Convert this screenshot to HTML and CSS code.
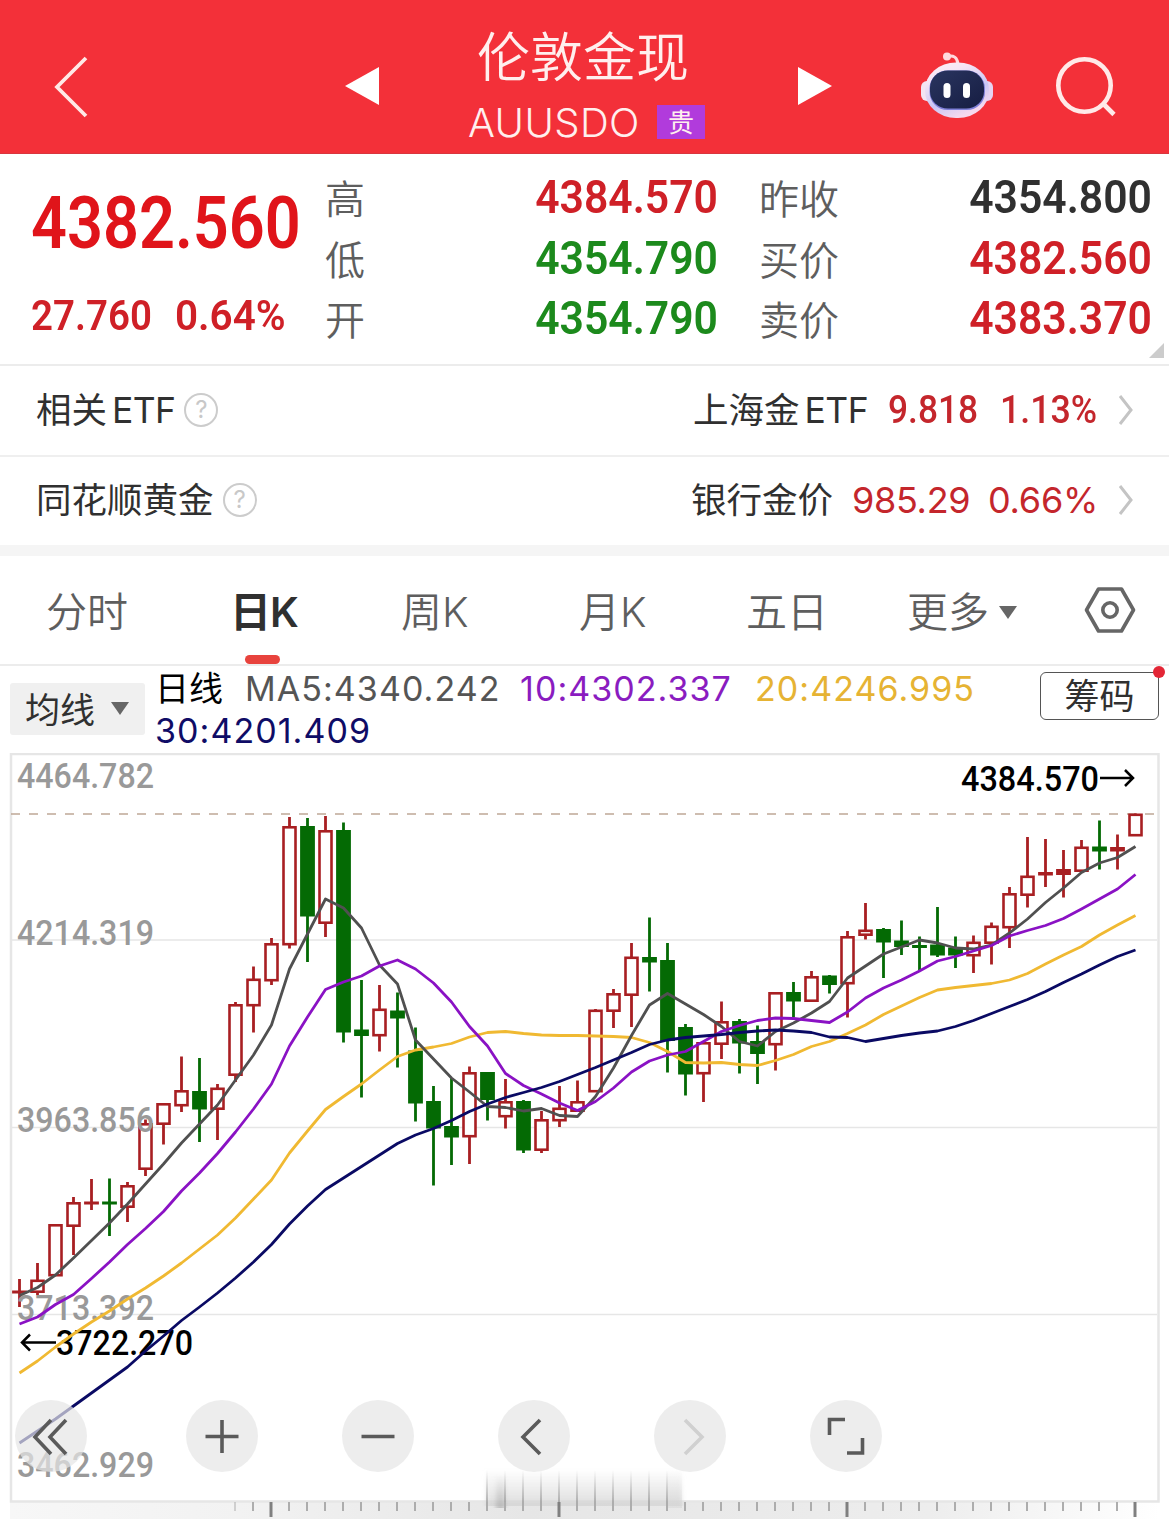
FILE: index.html
```html
<!DOCTYPE html>
<html lang="zh-CN">

<head>
    <meta charset="UTF-8">
    <title>伦敦金现 AUUSDO</title>
    <link rel="stylesheet" href="styles.css">
</head>

<body>
    <header class="header">
        <svg class="back" width="40" height="68" viewBox="0 0 40 68">
            <path d="M35 5 L6 34 L35 63" fill="none" stroke="#ffe9e6" stroke-width="3.8" />
        </svg>
        <svg class="prev" width="34" height="38" viewBox="0 0 34 38">
            <path d="M0 19 L34 0 V38 Z" fill="#fff" />
        </svg>
        <div class="title">
            <div class="title-name">伦敦金现</div>
            <div class="title-code">
                <span class="code">AUUSDO</span>
                <span class="badge">贵</span>
            </div>
        </div>
        <svg class="next" width="34" height="38" viewBox="0 0 34 38">
            <path d="M34 19 L0 0 V38 Z" fill="#fff" />
        </svg>
        <svg class="robot" width="74" height="70" viewBox="0 0 74 70">
            <defs>
                <linearGradient id="head" x1="0" y1="0" x2="0.5" y2="1">
                    <stop offset="0" stop-color="#fff0f4" />
                    <stop offset="0.3" stop-color="#f6e4f4" />
                    <stop offset="0.7" stop-color="#c9c6f5" />
                    <stop offset="1" stop-color="#f6d9ee" />
                </linearGradient>
                <linearGradient id="face" x1="0" y1="0" x2="1" y2="1">
                    <stop offset="0" stop-color="#2a3560" />
                    <stop offset="1" stop-color="#161d42" />
                </linearGradient>
            </defs>
            <path d="M27 7.500 Q37 5 38 15" fill="none" stroke="#ffd9de" stroke-width="3" />
            <circle cx="27" cy="7.500" r="4" fill="#ffd9de" />
            <rect x="1" y="32" width="12" height="20" rx="6" fill="#f3e4f2" />
            <rect x="61" y="32" width="12" height="20" rx="6" fill="#e6d3f2" />
            <rect x="5" y="13.500" width="64" height="55.500" rx="31" ry="27" fill="url(#head)" />
            <rect x="9.500" y="21.500" width="55.500" height="39.500" rx="18" fill="#7f80d8" />
            <rect x="10" y="21.500" width="54" height="38" rx="18" ry="17" fill="url(#face)" />
            <rect x="23.500" y="34" width="7" height="15" rx="3.500" fill="#fff" />
            <rect x="43" y="34" width="7" height="15" rx="3.500" fill="#fff" />
        </svg>
        <svg class="search" width="62" height="62" viewBox="0 0 62 62">
            <circle cx="28.500" cy="30.500" r="26.200" fill="none" stroke="#ffe9e8" stroke-width="4.600" />
            <path d="M47.500 49 L58 59.500" stroke="#ffe9e8" stroke-width="4.600" />
        </svg>
    </header>

    <section class="quote">
        <div class="quote-main">
            <div class="price din">4382.560</div>
            <div class="change">
                <span class="change-value din">27.760</span>
                <span class="change-rate din">0.64%</span>
            </div>
        </div>
        <div class="quote-grid">
            <span class="label">高</span><span class="value din up">4384.570</span>
            <span class="label">昨收</span><span class="value din">4354.800</span>
            <span class="label">低</span><span class="value din down">4354.790</span>
            <span class="label">买价</span><span class="value din up">4382.560</span>
            <span class="label">开</span><span class="value din down">4354.790</span>
            <span class="label">卖价</span><span class="value din up">4383.370</span>
        </div>
        <i class="corner"></i>
    </section>

    <section class="related">
        <div class="row">
            <span class="row-name">相关<span class="latin">ETF</span></span>
            <span class="help">?</span>
            <span class="row-target">上海金<span class="latin">ETF</span></span>
            <span class="etf-price din">9.818</span>
            <span class="etf-rate din">1.13%</span>
            <svg class="chevron" width="18" height="32" viewBox="0 0 18 32">
                <path d="M3 2 L14 16 L3 30" fill="none" stroke="#c4c4c4" stroke-width="3" />
            </svg>
        </div>
        <div class="row">
            <span class="row-name">同花顺黄金</span>
            <span class="help">?</span>
            <span class="row-target">银行金价</span>
            <span class="bank-price">985.29</span>
            <span class="bank-rate">0.66%</span>
            <svg class="chevron" width="18" height="32" viewBox="0 0 18 32">
                <path d="M3 2 L14 16 L3 30" fill="none" stroke="#c4c4c4" stroke-width="3" />
            </svg>
        </div>
    </section>

    <nav class="tabs">
        <span class="tab">分时</span>
        <span class="tab active">日K</span>
        <span class="tab">周K</span>
        <span class="tab">月K</span>
        <span class="tab">五日</span>
        <span class="tab">更多<i class="arrow-down"></i></span>
        <svg class="setting" width="52" height="48" viewBox="0 0 52 48">
            <path d="M14.500 3 H37.500 L49.500 24 L37.500 45 H14.500 L2.500 24 Z" fill="none" stroke="#666" stroke-width="3.600" stroke-linejoin="round" />
            <circle cx="26" cy="24" r="7.200" fill="none" stroke="#666" stroke-width="3.600" />
        </svg>
    </nav>

    <section class="ma-bar">
        <div class="ma-select">均线<i class="arrow-down"></i></div>
        <div class="ma-list">
            <span class="ma-title">日线</span>
            <span class="ma ma5">MA5:4340.242</span>
            <span class="ma ma10">10:4302.337</span>
            <span class="ma ma20">20:4246.995</span>
            <span class="ma ma30">30:4201.409</span>
        </div>
        <div class="chips">筹码<i class="dot"></i></div>
    </section>

    <section class="chart">
        <svg id="kline" width="1169" height="766" viewBox="0 753 1169 766">
            <defs>
                <linearGradient id="strip">
                    <stop offset="0" stop-color="#f7f7f7" />
                    <stop offset="0.2" stop-color="#f2f2f2" />
                    <stop offset="0.45" stop-color="#e6e6e6" />
                    <stop offset="0.8" stop-color="#ededed" />
                    <stop offset="1" stop-color="#fff" />
                </linearGradient>
                <linearGradient id="smear" x1="0" y1="0" x2="0" y2="1">
                    <stop offset="0" stop-color="#ddd" stop-opacity="0" />
                    <stop offset="1" stop-color="#d4d4d4" stop-opacity="0.8" />
                </linearGradient>
                <linearGradient id="streak" x1="0" y1="0" x2="0" y2="1">
                    <stop offset="0" stop-color="#aaa" stop-opacity="0" />
                    <stop offset="1" stop-color="#999" stop-opacity="0.8" />
                </linearGradient>
                <filter id="soft" x="-0.5" y="0" width="2" height="1">
                    <feGaussianBlur stdDeviation="2 0" />
                </filter>
            </defs>
            <rect x="10" y="1502" width="1149" height="17" fill="url(#strip)" />
            <g id="grid"></g>
            <g id="candles"></g>
            <g class="axis">
                <text x="17" y="788" textLength="137" lengthAdjust="spacingAndGlyphs">4464.782</text>
                <text x="17" y="945" textLength="137" lengthAdjust="spacingAndGlyphs">4214.319</text>
                <text x="17" y="1132" textLength="137" lengthAdjust="spacingAndGlyphs">3963.856</text>
                <text x="17" y="1320" textLength="137" lengthAdjust="spacingAndGlyphs">3713.392</text>
                <text x="17" y="1477" textLength="137" lengthAdjust="spacingAndGlyphs">3462.929</text>
            </g>
            <g class="mark">
                <text x="961" y="791" textLength="138" lengthAdjust="spacingAndGlyphs">4384.570</text>
                <path d="M1100 778 H1133 M1125 770 L1133 778 L1125 786" />
                <text x="56" y="1355" textLength="137" lengthAdjust="spacingAndGlyphs">3722.270</text>
                <path d="M56 1342.500 H22 M30 1334.500 L22 1342.500 L30 1350.500" />
            </g>
            <g id="lines"></g>
            <g id="ticks"></g>
        </svg>

        <div class="controls">
            <div class="control first">
                <svg width="72" height="72" viewBox="0 0 72 72"><path d="M36 20 L20 37 L36 54 M51 20 L35 37 L51 54" /></svg>
            </div>
            <div class="control">
                <svg width="72" height="72" viewBox="0 0 72 72"><path d="M36 20 V53 M19.500 36.500 H52.500" /></svg>
            </div>
            <div class="control">
                <svg width="72" height="72" viewBox="0 0 72 72"><path d="M19.500 36.500 H52.500" /></svg>
            </div>
            <div class="control">
                <svg width="72" height="72" viewBox="0 0 72 72"><path d="M42 20 L25 37 L42 54" /></svg>
            </div>
            <div class="control disabled">
                <svg width="72" height="72" viewBox="0 0 72 72"><path d="M31 20 L48 37 L31 54" /></svg>
            </div>
            <div class="control">
                <svg width="72" height="72" viewBox="0 0 72 72"><path d="M19.500 35 V19.500 H35 M37 53 H52.500 V38" /></svg>
            </div>
        </div>
    </section>

    <script src="script.js"></script>
</body>

</html>
```

FILE: styles.css
```css
* {
    box-sizing: border-box;
}

body {
    margin: 0;
    width: 1169px;
    height: 1519px;
    overflow: hidden;
    background-color: #fff;
    color: #303030;
    font-family: Inter, "Noto Sans CJK SC", sans-serif;
}

svg {
    display: block;
    flex: none;
}

/* condensed number face */
.din {
    display: inline-block;
    font-family: Roboto, sans-serif;
    font-weight: 600;
    white-space: nowrap;
    transform-origin: left center;
}

/* header */
.header {
    display: flex;
    height: 154px;
    background-color: #f33039;
    border-bottom: 1px solid #d9363e;
    color: #ffefee;
}

.back {
    margin: 53px 0 0 51px;
}

.prev {
    margin: 67px 0 0 254px;
}

.title {
    width: 288px;
    margin-left: 60px;
    padding-top: 26px;
}

.title-name {
    height: 64px;
    line-height: 64px;
    font-size: 53px;
    font-weight: 350;
    text-align: center;
}

.title-code {
    display: flex;
    align-items: center;
    height: 64px;
    padding-left: 29px;
}

.code {
    width: 188px;
    font-size: 40px;
    font-weight: 350;
    letter-spacing: 0.4px;
}

.badge {
    width: 48px;
    height: 34px;
    margin-left: 1px;
    line-height: 36px;
    background-color: #b13bdc;
    font-size: 26px;
    text-align: center;
}

.next {
    margin: 67px 0 0 71px;
}

.robot {
    margin: 49px 0 0 88px;
}

.search {
    margin: 55px 0 0 62px;
}

/* quote */
.quote {
    position: relative;
    display: flex;
    height: 212px;
    padding-left: 31px;
    border-bottom: 2px solid #ececec;
}

.quote-main {
    width: 294px;
    padding-top: 30px;
    color: #e0141a;
}

.price {
    height: 80px;
    line-height: 80px;
    font-size: 72px;
    transform: scaleX(0.875);
}

.change {
    display: flex;
    margin-top: 26px;
    font-size: 43px;
    line-height: 50px;
    color: #cf2027;
}

.change-value {
    width: 144px;
    transform: scaleX(0.895);
}

.change-rate {
    transform: scaleX(0.94);
}

.quote-grid {
    display: grid;
    grid-template-columns: 134px 300px 134px 259px;
    grid-auto-rows: 60.5px;
    line-height: 60px;
    padding-top: 13px;
}

.label {
    padding-top: 3px;
    font-size: 40px;
    font-weight: 350;
    color: #5e5e5e;
}

.value {
    width: 259px;
    font-size: 47px;
    text-align: right;
    transform: scaleX(0.908);
    transform-origin: right center;
}

.up {
    color: #cf2027;
}

.down {
    color: #1c8a1c;
}

.corner {
    position: absolute;
    right: 5px;
    bottom: 6px;
    border-left: 15px solid transparent;
    border-bottom: 15px solid #ccc;
}

/* related rows */
.related {
    border-bottom: 11px solid #f5f5f5;
}

.row {
    display: flex;
    align-items: center;
    height: 89px;
    padding: 0 34px 1px 36px;
    font-size: 35.5px;
}

.row + .row {
    height: 90px;
    border-top: 2px solid #efefef;
    padding-bottom: 2px;
}

.row-name,
.row-target {
    margin-top: -5px;
}

.latin {
    margin-left: 5px;
    font-size: 35.5px;
    letter-spacing: -0.6px;
}

.help {
    width: 34px;
    height: 34px;
    margin-left: 9px;
    border: 2.5px solid #ccc;
    border-radius: 50%;
    line-height: 29px;
    font-size: 24px;
    text-align: center;
    color: #c8c8c8;
}

.row-target {
    margin-left: auto;
}

.etf-price,
.etf-rate,
.bank-price,
.bank-rate {
    color: #c4262c;
}

.etf-price {
    width: 112px;
    margin-left: 20px;
    font-size: 38px;
    font-weight: 500;
    transform: scaleX(0.93);
}

.etf-rate {
    width: 117px;
    font-size: 38px;
    font-weight: 500;
    transform: scaleX(0.94);
}

.bank-price {
    width: 136px;
    margin-left: 19px;
    font-size: 36px;
    letter-spacing: -0.3px;
}

.bank-rate {
    width: 129px;
    font-size: 36px;
    letter-spacing: -0.2px;
}

/* tabs */
.tabs {
    display: grid;
    grid-template-columns: 184px 171px 178px 167px 161px 177px 52px;
    align-items: center;
    height: 110px;
    padding-left: 46px;
    border-bottom: 2px solid #ececec;
}

.tab {
    position: relative;
    height: 108px;
    line-height: 112px;
    font-size: 41px;
    font-weight: 350;
    color: #5e5e5e;
    white-space: nowrap;
}

.tab.active {
    font-weight: 600;
    letter-spacing: -1px;
    color: #303030;
}

.tab.active::after {
    content: "";
    position: absolute;
    left: 15px;
    bottom: 0;
    width: 35px;
    height: 9px;
    border-radius: 5px;
    background-color: #e8433d;
}

.arrow-down {
    display: inline-block;
    margin-left: 10px;
    border: 9px solid transparent;
    border-top: 13px solid #666;
    border-bottom: 0;
    vertical-align: 8px;
}

/* moving averages */
.ma-bar {
    display: flex;
    height: 87px;
    padding-left: 10px;
}

.ma-select {
    width: 135px;
    height: 52px;
    margin-top: 17px;
    padding-left: 15px;
    border-radius: 3px;
    background-color: #f0f0f0;
    line-height: 55px;
    font-size: 35px;
}

.ma-select .arrow-down {
    margin-left: 16px;
}

.ma-list {
    display: flex;
    flex-wrap: wrap;
    align-content: flex-start;
    width: 880px;
    padding: 2px 0 0 10px;
    line-height: 42px;
    font-size: 34px;
}

.ma-title {
    width: 90px;
    color: #000;
}

.ma {
    letter-spacing: 1.05px;
}

.ma5 {
    width: 275px;
    color: #555;
}

.ma10 {
    width: 235px;
    color: #8a1cc0;
}

.ma20 {
    width: 265px;
    color: #e6b333;
}

.ma30 {
    color: #0f0c66;
}

.chips {
    position: relative;
    width: 119px;
    height: 48px;
    margin: 6px 0 0 15px;
    border: 1.5px solid #555;
    border-radius: 6px;
    line-height: 46px;
    font-size: 35px;
    text-align: center;
}

.dot {
    position: absolute;
    top: -7px;
    right: -7px;
    width: 12px;
    height: 12px;
    border-radius: 50%;
    background-color: #e32636;
}

/* chart */
.chart {
    position: relative;
    height: 766px;
}

.axis,
.mark {
    font-family: Roboto, sans-serif;
    font-size: 34.5px;
    font-weight: 500;
}

.axis {
    fill: #999;
}

.mark {
    fill: #000;
}

.mark path {
    fill: none;
    stroke: #000;
    stroke-width: 2.5;
}

.controls {
    position: absolute;
    left: 15px;
    top: 647px;
    display: flex;
    gap: 84px;
}

.control {
    width: 72px;
    height: 72px;
    border-radius: 50%;
    background-color: rgba(230, 230, 230, 0.7);
}

.control.first {
    margin-right: 15px;
}

.control path {
    fill: none;
    stroke: #5a5a5a;
    stroke-width: 3.6;
}

.control.disabled path {
    stroke: #d0d0d0;
}
```

FILE: script.js
```js
const STEP = 18;
const START = 19.5;
const RED = '#a81f22';
const GREEN = '#046a04';

// [type, body top, body bottom, high, low]   r = hollow, s = solid red, g = green
const candles = [
    ['s', 1290.5, 1293.5, 1279, 1307], ['r', 1279.5, 1293, 1263, 1295], ['r', 1224, 1276.5, 1224, 1276],
    ['r', 1202, 1227, 1197, 1255], ['s', 1201.5, 1204.5, 1179, 1210], ['g', 1201.5, 1204.5, 1178.5, 1236],
    ['r', 1185, 1208, 1182, 1222], ['r', 1123, 1170, 1119.5, 1176], ['r', 1103, 1125, 1103, 1144.5],
    ['r', 1090, 1106.5, 1056.5, 1112], ['g', 1091, 1109.5, 1058, 1142], ['r', 1087.5, 1110, 1084, 1140],
    ['r', 1004, 1076, 1002, 1082], ['r', 978.5, 1006.5, 966.5, 1032.5], ['r', 943, 981.5, 938, 985],
    ['r', 826, 945.5, 817, 948.5], ['g', 826, 916.5, 818, 962], ['r', 830, 924, 816, 937],
    ['g', 830, 1032.5, 822.5, 1042.5], ['g', 1029.5, 1036, 980, 1097.5], ['r', 1008.5, 1036.5, 985, 1051.5],
    ['g', 1010.5, 1018.5, 992.5, 1067.5], ['g', 1050.5, 1103.5, 1027.5, 1121.5], ['g', 1101, 1128.5, 1086, 1185.5],
    ['g', 1126, 1137.5, 1078, 1165], ['r', 1072, 1137.5, 1066.5, 1164], ['g', 1072, 1100, 1072, 1120.5],
    ['r', 1101, 1117.5, 1079, 1128.5], ['g', 1101, 1150.5, 1100, 1153], ['r', 1119, 1151, 1111, 1153],
    ['r', 1107.5, 1121.5, 1086, 1127], ['r', 1101, 1112, 1080.5, 1112], ['r', 1009.5, 1092.5, 1009, 1092],
    ['r', 993, 1012, 989, 1028], ['r', 956.5, 996, 943, 1027], ['g', 957, 962.5, 917.5, 991.5],
    ['g', 960, 1041, 943, 1072.5], ['g', 1027, 1074.5, 1024, 1095.5], ['r', 1042, 1074.5, 1042, 1102],
    ['r', 1021, 1045, 1001.5, 1059], ['g', 1021, 1043.5, 1019, 1073.5], ['g', 1041, 1054, 1025.5, 1084],
    ['r', 992, 1045.5, 992, 1070.5], ['g', 992, 1001.5, 982, 1017.5], ['r', 976, 1002, 971, 1001],
    ['g', 975.5, 985, 975, 993.5], ['r', 936, 984.5, 931, 1017.5], ['r', 929.5, 936, 903, 939.5],
    ['g', 929, 942.5, 928, 978], ['g', 940.5, 947, 920.5, 955], ['g', 945, 948, 936.5, 970],
    ['g', 944.5, 955.5, 907, 957], ['g', 947.5, 955.5, 936.5, 968], ['r', 941.5, 956.5, 935.5, 973],
    ['r', 925.5, 944, 922.5, 964.5], ['r', 893, 928.5, 887, 948], ['r', 875.5, 896, 837, 907.5],
    ['s', 872, 875.5, 839, 887], ['s', 869, 875, 850, 897.5], ['r', 846.5, 872, 840, 871],
    ['g', 846.5, 851.5, 820.5, 869.5], ['s', 847, 851.5, 834.5, 869.5], ['r', 813.5, 836.5, 813.5, 836]
];

const averages = {
    '#f0b932': [1373, 1361, 1347, 1334, 1322, 1311, 1299, 1288, 1276, 1263, 1249, 1235, 1218, 1199, 1180, 1153,
        1131, 1109.5, 1096.5, 1084, 1070, 1056.5, 1050, 1047, 1043.5, 1037, 1032.5, 1031.5, 1033.5, 1035, 1035.5,
        1035.5, 1036, 1036.5, 1037.5, 1042.5, 1051.5, 1062.5, 1063, 1062.5, 1064.5, 1065.5, 1060.5, 1054.5, 1046.5,
        1041.5, 1033.5, 1025, 1014.5, 1006, 997.5, 990, 987.5, 985.5, 983.5, 980, 973.5, 964, 955, 946.5, 935, 925, 915.5],
    '#505050': [1295.5, 1287.5, 1275, 1258, 1240.5, 1223, 1204, 1184, 1164, 1143, 1124, 1105, 1080, 1055, 1025, 969,
        934, 899, 908, 928, 965, 984, 1040, 1059, 1078, 1092, 1106.5, 1107.5, 1111, 1108.5, 1115.5,
        1116.5, 1096.5, 1068, 1035.5, 1005, 993.5, 1004, 1014.5, 1026.5, 1041.5, 1046, 1031.5, 1023, 1013,
        1001.5, 978, 966, 954, 947, 940, 943, 948, 949, 945, 933, 919, 902.5, 888, 872.5, 863, 857.5, 846.5],
    '#8a12c4': [1324, 1317, 1304.5, 1294.5, 1278.5, 1262, 1244.5, 1228.5, 1211.5, 1191, 1173, 1153.5, 1132, 1109, 1084, 1046,
        1017, 989.5, 982, 976, 966, 960, 969, 983, 1002, 1026.5, 1046, 1073.5, 1085.5, 1094, 1103,
        1110.5, 1101.5, 1088, 1072, 1061, 1055, 1051.5, 1041.5, 1031.5, 1025.5, 1020.5, 1018, 1018.5, 1020.5,
        1022.5, 1012, 998, 988, 980, 971, 961, 956.5, 951, 945.5, 936, 930.5, 925.5, 918.5, 909, 899, 889, 874.5],
    '#0a0a64': [1443, 1431, 1419, 1406, 1393, 1380, 1367, 1351, 1336, 1320.5, 1307, 1293, 1278, 1262, 1244.5, 1224,
        1206, 1189.5, 1178, 1166.5, 1155, 1143.5, 1135, 1128.5, 1120.5, 1111.5, 1104, 1097.5, 1092.5, 1087.5, 1081.5,
        1074.5, 1067.5, 1060, 1052.5, 1044.5, 1040, 1037.5, 1036, 1034.5, 1032.5, 1031, 1030, 1031, 1032.5,
        1037, 1037.5, 1041.5, 1038.5, 1035.5, 1033, 1031, 1026.5, 1020.5, 1013.5, 1006.5, 999.5, 991.5, 982.5, 974, 965, 956.5, 950]
};

function add(groupId, name, attrs) {
    const el = document.createElementNS('http://www.w3.org/2000/svg', name);
    for (const key in attrs) {
        el.setAttribute(key, attrs[key]);
    }
    document.getElementById(groupId).appendChild(el);
}

function drawGrid() {
    add('grid', 'rect', { x: 11, y: 754, width: 1147.5, height: 747.5, fill: 'none', stroke: '#e6e6e6', 'stroke-width': 2.5 });
    [940, 1127.5, 1314.5].forEach(y => {
        add('grid', 'path', { d: `M12 ${y} H1157`, stroke: '#e6e6e6', 'stroke-width': 1.6 });
    });
    add('grid', 'path', { d: 'M11 814 H1157', stroke: '#bfa896', 'stroke-width': 1.5, 'stroke-dasharray': '9 9' });
}

function drawCandles() {
    candles.forEach(([type, top, bottom, high, low], i) => {
        const x = START + i * STEP;
        const color = type === 'g' ? GREEN : RED;
        add('candles', 'path', { d: `M${x} ${high} V${top + 1} M${x} ${bottom - 1} V${low}`, stroke: color, 'stroke-width': 2.8 });
        if (type === 'r') {
            add('candles', 'rect', {
                x: x - 6, y: top + 1.3, width: 12, height: bottom - top - 2.6,
                fill: '#fff', stroke: color, 'stroke-width': 2.6
            });
        } else {
            add('candles', 'rect', { x: x - 7.4, y: top, width: 14.8, height: bottom - top, fill: color });
        }
    });
}

function drawLines() {
    for (const color in averages) {
        const points = averages[color].map((y, i) => `${START + i * STEP},${y}`).join(' ');
        add('lines', 'polyline', { points, fill: 'none', stroke: color, 'stroke-width': 2.8, 'stroke-linejoin': 'round' });
    }
}

function drawTicks() {
    // blurred scrubber thumb
    add('ticks', 'rect', { x: 486, y: 1468, width: 196, height: 38, fill: 'url(#smear)', filter: 'url(#soft)' });
    add('ticks', 'rect', { x: 496, y: 1474, width: 9, height: 34, fill: 'url(#streak)', opacity: 0.6, filter: 'url(#soft)' });
    add('ticks', 'rect', { x: 668, y: 1470, width: 14, height: 38, fill: 'url(#smear)', opacity: 0.6 });
    for (let x = 235; x <= 1136; x += STEP) {
        const major = (x - 271) % 288 === 0;
        const inThumb = x > 480 && x < 680;
        if (inThumb) {
            add('ticks', 'rect', { x: x - 1, y: 1470, width: 2, height: 36, fill: 'url(#streak)' });
        }
        add('ticks', 'path', {
            d: `M${x} 1502 V${major ? 1517 : 1511}`,
            stroke: major ? '#808080' : '#adadad',
            'stroke-width': major ? 3 : 2,
            opacity: x < 240 ? 0.5 : 1
        });
    }
}

drawGrid();
drawCandles();
drawLines();
drawTicks();
```
